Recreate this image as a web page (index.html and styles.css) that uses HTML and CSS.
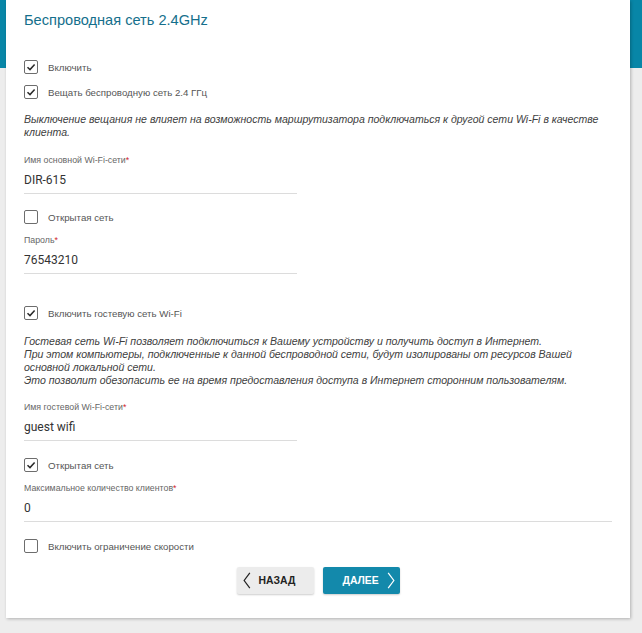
FILE: index.html
```html
<!DOCTYPE html>
<html lang="ru">
<head>
<meta charset="utf-8">
<title>Беспроводная сеть 2.4GHz</title>
<link rel="stylesheet" href="styles.css">
</head>
<body>
<div class="page">
  <div class="card">
    <h1 class="title">Беспроводная сеть 2.4GHz</h1>

    <label class="check c-first"><span class="box on"><svg viewBox="0 0 14 14"><path d="M3.5 7.2 L6 9.6 L10.6 4.4"/></svg></span><span class="txt">Включить</span></label>
    <label class="check c-tight"><span class="box on"><svg viewBox="0 0 14 14"><path d="M3.5 7.2 L6 9.6 L10.6 4.4"/></svg></span><span class="txt">Вещать беспроводную сеть 2.4 ГГц</span></label>

    <p class="note n1">Выключение вещания не влияет на возможность маршрутизатора подключаться к другой сети Wi-Fi в качестве клиента.</p>

    <div class="field f1">
      <div class="lbl">Имя основной Wi-Fi-сети<span class="req">*</span></div>
      <div class="inp short">DIR-615</div>
    </div>

    <label class="check c16"><span class="box"></span><span class="txt">Открытая сеть</span></label>

    <div class="field f10">
      <div class="lbl">Пароль<span class="req">*</span></div>
      <div class="inp short">76543210</div>
    </div>

    <label class="check c32"><span class="box on"><svg viewBox="0 0 14 14"><path d="M3.5 7.2 L6 9.6 L10.6 4.4"/></svg></span><span class="txt">Включить гостевую сеть Wi-Fi</span></label>

    <p class="note n2">Гостевая сеть Wi-Fi позволяет подключиться к Вашему устройству и получить доступ в Интернет.<br>При этом компьютеры, подключенные к данной беспроводной сети, будут изолированы от ресурсов Вашей основной локальной сети.<br>Это позволит обезопасить ее на время предоставления доступа в Интернет сторонним пользователям.</p>

    <div class="field f14">
      <div class="lbl">Имя гостевой Wi-Fi-сети<span class="req">*</span></div>
      <div class="inp short">guest wifi</div>
    </div>

    <label class="check c17"><span class="box on"><svg viewBox="0 0 14 14"><path d="M3.5 7.2 L6 9.6 L10.6 4.4"/></svg></span><span class="txt">Открытая сеть</span></label>

    <div class="field f10">
      <div class="lbl">Максимальное количество клиентов<span class="req">*</span></div>
      <div class="inp">0</div>
    </div>

    <label class="check c17"><span class="box"></span><span class="txt">Включить ограничение скорости</span></label>

    <div class="buttons">
      <button class="btn back"><svg viewBox="0 0 8 18" class="chev"><path d="M7 1 L1 9 L7 17"/></svg><span>НАЗАД</span></button>
      <button class="btn next"><span>ДАЛЕЕ</span><svg viewBox="0 0 8 18" class="chev"><path d="M1 1 L7 9 L1 17"/></svg></button>
    </div>
  </div>
</div>
</body>
</html>
```

FILE: styles.css
```css
* { box-sizing: border-box; }
html, body { margin: 0; padding: 0; }
body {
  background: #ededed;
  font-family: "Liberation Sans", Arial, sans-serif;
  color: #444;
}
.page {
  min-height: 633px;
  background: linear-gradient(#0886a7 0, #0886a7 68px, #ededed 68px);
  padding: 0 12px 0 6px;
}
.card {
  background: #fff;
  width: 624px;
  padding: 10px 18px 24px;
  box-shadow: 1px 1px 3px rgba(0,0,0,0.25);
  display: flex;
  flex-direction: column;
  align-items: flex-start;
}
.title {
  margin: 0;
  font-size: 14.6px;
  line-height: 21px;
  font-weight: normal;
  color: #156f8c;
}
.check {
  display: flex;
  align-items: center;
  height: 14px;
  cursor: pointer;
}
.c-first { margin-top: 29px; }
.c-tight { margin-top: 11px; }
.c16 { margin-top: 16px; }
.c32 { margin-top: 32px; }
.c17 { margin-top: 17px; }
.box {
  width: 14px;
  height: 14px;
  border: 1.5px solid #6d6d6d;
  border-radius: 2px;
  display: flex;
  align-items: center;
  justify-content: center;
  flex: none;
}
.box svg {
  width: 14px;
  height: 14px;
  flex: none;
}
.box svg path {
  fill: none;
  stroke: #2b2b2b;
  stroke-width: 1.5;
}
.txt {
  margin-left: 10px;
  font-size: 9.7px;
  color: #555;
}
.note {
  margin: 0;
  font-size: 10.55px;
  line-height: 13px;
  font-style: italic;
  color: #404040;
  width: 100%;
}
.n1 { margin-top: 14px; }
.n2 { margin-top: 15px; }
.field { display: flex; flex-direction: column; width: 100%; }
.f1 { margin-top: 15px; }
.f10 { margin-top: 10px; }
.f14 { margin-top: 14px; }
.lbl {
  font-size: 8.8px;
  line-height: 12px;
  color: #666;
}
.req { color: #d0262c; }
.inp {
  margin-top: 2px;
  height: 26px;
  line-height: 25px;
  font-family: Roboto, "Liberation Sans", sans-serif;
  font-size: 12px;
  color: #333;
  border-bottom: 1px solid #dcdcdc;
  width: 100%;
}
.inp.short { width: 273px; }
.buttons {
  margin-top: 14px;
  align-self: center;
  display: flex;
  gap: 9px;
}
.btn {
  width: 77px;
  height: 27px;
  border: none;
  border-radius: 2px;
  display: flex;
  align-items: center;
  font-family: "Liberation Sans", Arial, sans-serif;
  font-weight: bold;
  font-size: 10.4px;
  padding: 0;
  box-shadow: 0 1px 2px rgba(0,0,0,0.2);
}
.btn.back {
  background: #ececec;
  color: #222;
  padding-left: 6px;
  gap: 8px;
}
.btn.next {
  background: #1389ab;
  color: #fff;
  padding-left: 20px;
  gap: 8px;
}
.chev {
  width: 8px;
  height: 17px;
  flex: none;
}
.chev path {
  fill: none;
  stroke-width: 1.3;
}
.back .chev path { stroke: #222; }
.next .chev path { stroke: #fff; }
```
